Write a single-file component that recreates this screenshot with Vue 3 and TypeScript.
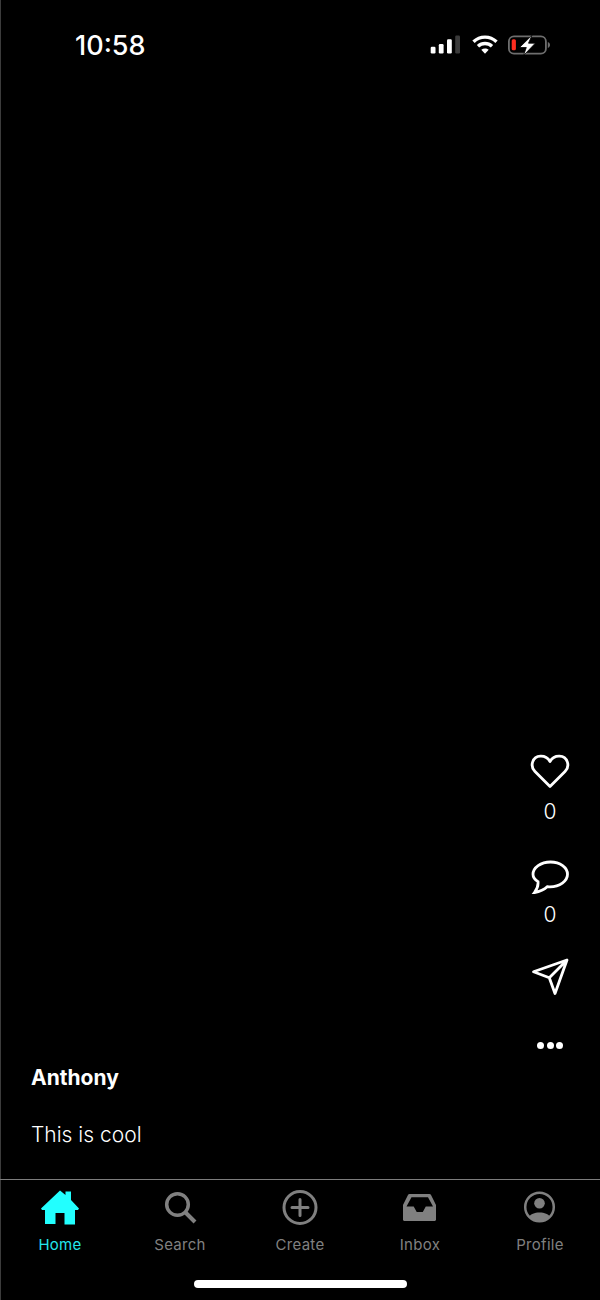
<template>
  <div class="screen">
    <header class="status-bar">
      <span class="time">10:58</span>
      <div class="status-icons">
        <svg class="signal" width="30" height="20" viewBox="0 0 30 20">
          <rect x="0.700" y="11.700" width="4.800" height="6.800" rx="1.200" fill="#fff" />
          <rect x="8.800" y="9" width="4.800" height="9.500" rx="1.200" fill="#fff" />
          <rect x="17" y="4.300" width="4.800" height="14.200" rx="1.200" fill="#fff" />
          <rect x="25.200" y="0.600" width="4.800" height="17.900" rx="1.200" fill="#3a3a3a" />
        </svg>
        <svg class="wifi" width="26" height="20" viewBox="0 0 26 20">
          <path d="M1.500 6.800C8 .6 18 .6 24.500 6.800" fill="none" stroke="#fff" stroke-width="3.400" />
          <path d="M6 11.300c4-3.700 10-3.700 14 0" fill="none" stroke="#fff" stroke-width="3.400" />
          <path d="M9.300 14.800c2.200-1.900 5.200-1.900 7.400 0L13 18.800z" fill="#fff" />
        </svg>
        <svg class="battery" width="42" height="20" viewBox="0 0 42 20">
          <rect x="0.900" y="1.300" width="37" height="17.400" rx="5" fill="none" stroke="#6e6e6e" stroke-width="1.800" />
          <path d="M39.800 7v6c1.300-.4 2.200-1.600 2.200-3s-.9-2.600-2.200-3z" fill="#6e6e6e" />
          <rect x="3.700" y="4.300" width="4.200" height="10.900" rx="1.500" fill="#ff2d20" />
          <path d="M24 .3 11.500 12.500h6.800L15.500 20.500 27.300 8.200h-6.800z" fill="#fff" stroke="#000" stroke-width="0.800" />
        </svg>
      </div>
    </header>

    <main class="feed">
      <section class="post-info">
        <div class="author">Anthony</div>
        <div class="caption">This is cool</div>
      </section>

      <aside class="actions">
        <div class="action like">
          <svg width="40" height="36" viewBox="0 0 40 36">
            <path d="M20 33.500 5 18.500C-.5 13 2.500 3.500 10.500 3.200c4.300-.2 7.500 2 9.500 5.300 2-3.300 5.200-5.500 9.500-5.300 8 .3 11 9.800 5.500 15.300z" fill="none" stroke="#fff" stroke-width="2.800" stroke-linejoin="round" />
          </svg>
          <span class="count">0</span>
        </div>
        <div class="action comment">
          <svg width="40" height="34" viewBox="0 0 40 34">
            <path d="M20.500 2C10.800 2 3 7.500 3 14.300c0 3 1.700 5.400 5 7.300.4 3.700-.8 7.300-3.500 10.900 5.500-.8 9.800-2.800 13-5.900.8.100 1.700.2 2.500.2 9.700 0 17.500-5.700 17.500-12.500S30.200 2 20.500 2z" fill="none" stroke="#fff" stroke-width="2.800" stroke-linejoin="miter" />
          </svg>
          <span class="count">0</span>
        </div>
        <div class="action share">
          <svg width="38" height="38" viewBox="0 0 38 38">
            <path d="M36 2 2.500 13.700l15.800 6L24 35.500zM36 2 18.300 19.700" fill="none" stroke="#fff" stroke-width="2.800" stroke-linejoin="round" stroke-linecap="round" />
          </svg>
        </div>
        <div class="more">
          <i></i><i></i><i></i>
        </div>
      </aside>
    </main>

    <nav class="tab-bar">
      <div v-for="tab in tabs" :key="tab.name" class="tab" :class="{ active: tab.name === 'Home' }">
        <svg class="tab-icon" width="44" height="40" viewBox="0 0 44 40" v-html="tab.icon"></svg>
        <span class="tab-label">{{ tab.name }}</span>
      </div>
    </nav>

    <div class="home-indicator-wrap">
      <div class="home-indicator"></div>
    </div>
  </div>
</template>

<script setup lang="ts">
interface Tab {
  name: string
  icon: string
}

const tabs: Tab[] = [
  {
    name: 'Home',
    icon: '<path fill="#22ffff" d="M22 3.500 27.500 8V4.500h5.500V13l8 8.500-1 1.500h-3v14.500H26.500V26h-9v11H7V23H4l-1-1.500z"/>',
  },
  {
    name: 'Search',
    icon: '<circle cx="19.500" cy="17.500" r="10.800" fill="none" stroke="#808080" stroke-width="3.500"/><path d="m27.500 25.500 9.500 9.500" fill="none" stroke="#808080" stroke-width="4"/>',
  },
  {
    name: 'Create',
    icon: '<circle cx="22" cy="20.500" r="16" fill="none" stroke="#808080" stroke-width="3"/><path d="M22 12.500v16M14 20.500h16" fill="none" stroke="#808080" stroke-width="3" stroke-linecap="round"/>',
  },
  {
    name: 'Inbox',
    icon: '<path fill="#808080" fill-rule="evenodd" d="M12 7h19.500c.6 0 1.100.3 1.400.8L38 18v14.500c0 .8-.7 1.500-1.500 1.500h-30c-.8 0-1.500-.7-1.500-1.500V18l5.100-10.200c.3-.5.800-.8 1.400-.8zm1.500 3.200L8.500 19.500h7.200l3 5.500h6.100l3-5.500h7.200l-5-9.300z"/>',
  },
  {
    name: 'Profile',
    icon: '<circle cx="21.500" cy="20" r="14.300" fill="none" stroke="#808080" stroke-width="2.500"/><circle cx="21.500" cy="16.300" r="5.300" fill="#808080"/><path fill="#808080" d="M11 30c1.500-3 5.500-4.500 10.500-4.500S30.500 27 32 30c-2.700 3-6.500 4.800-10.500 4.800S13.700 33 11 30z"/>',
  },
]
</script>

<style>
html,
body {
  margin: 0;
  background: #000;
}
</style>

<style scoped>
.screen {
  width: 600px;
  height: 1300px;
  box-sizing: border-box;
  display: flex;
  flex-direction: column;
  background: #000;
  box-shadow: inset 1px 0 0 #3c3c3c;
  color: #fff;
  font-family: Inter, "Liberation Sans", sans-serif;
  overflow: hidden;
}

.status-bar {
  height: 90px;
  flex: none;
  display: flex;
  align-items: center;
  justify-content: space-between;
  padding: 0 50px 0 75px;
  box-sizing: border-box;
}

.time {
  font-size: 27px;
  font-weight: 500;
}

.status-icons {
  display: flex;
  align-items: center;
  gap: 10px;
}

.signal {
  margin-right: 2px;
}

.feed {
  flex: 1;
  display: flex;
  justify-content: space-between;
  align-items: flex-end;
  padding: 0 30px 0 31px;
  min-height: 0;
}

.post-info {
  padding-bottom: 30px;
}

.author {
  font-size: 21px;
  font-weight: 700;
  line-height: 28px;
}

.caption {
  font-size: 21px;
  font-weight: 300;
  line-height: 28px;
  margin-top: 29px;
}

.actions {
  display: flex;
  flex-direction: column;
  align-items: center;
  width: 40px;
  padding-bottom: 130px;
}

.action {
  display: flex;
  flex-direction: column;
  align-items: center;
}

.action svg {
  display: block;
}

.count {
  font-size: 21px;
  font-weight: 300;
  line-height: 28px;
  margin-top: 9px;
}

.comment {
  margin-top: 34px;
}

.comment .count {
  margin-top: 7px;
}

.share {
  margin-top: 29px;
}

.more {
  display: flex;
  gap: 2.5px;
  margin-top: 46px;
}

.more i {
  display: block;
  width: 7px;
  height: 7px;
  border-radius: 50%;
  background: #fff;
}

.tab-bar {
  flex: none;
  display: flex;
  height: 101px;
  box-sizing: border-box;
  border-top: 1px solid #7d7d7d;
  padding-top: 7px;
}

.tab {
  width: 120px;
  display: flex;
  flex-direction: column;
  align-items: center;
  color: #808080;
}

.tab.active {
  color: #22e6ee;
}

.tab-icon {
  flex: none;
  display: block;
}

.tab-label {
  font-size: 15px;
  line-height: 20px;
  letter-spacing: 0.3px;
  margin-top: 8px;
}

.home-indicator-wrap {
  flex: none;
  height: 20px;
  display: flex;
  justify-content: center;
}

.home-indicator {
  width: 213px;
  height: 8px;
  border-radius: 4px;
  background: #fff;
}
</style>
